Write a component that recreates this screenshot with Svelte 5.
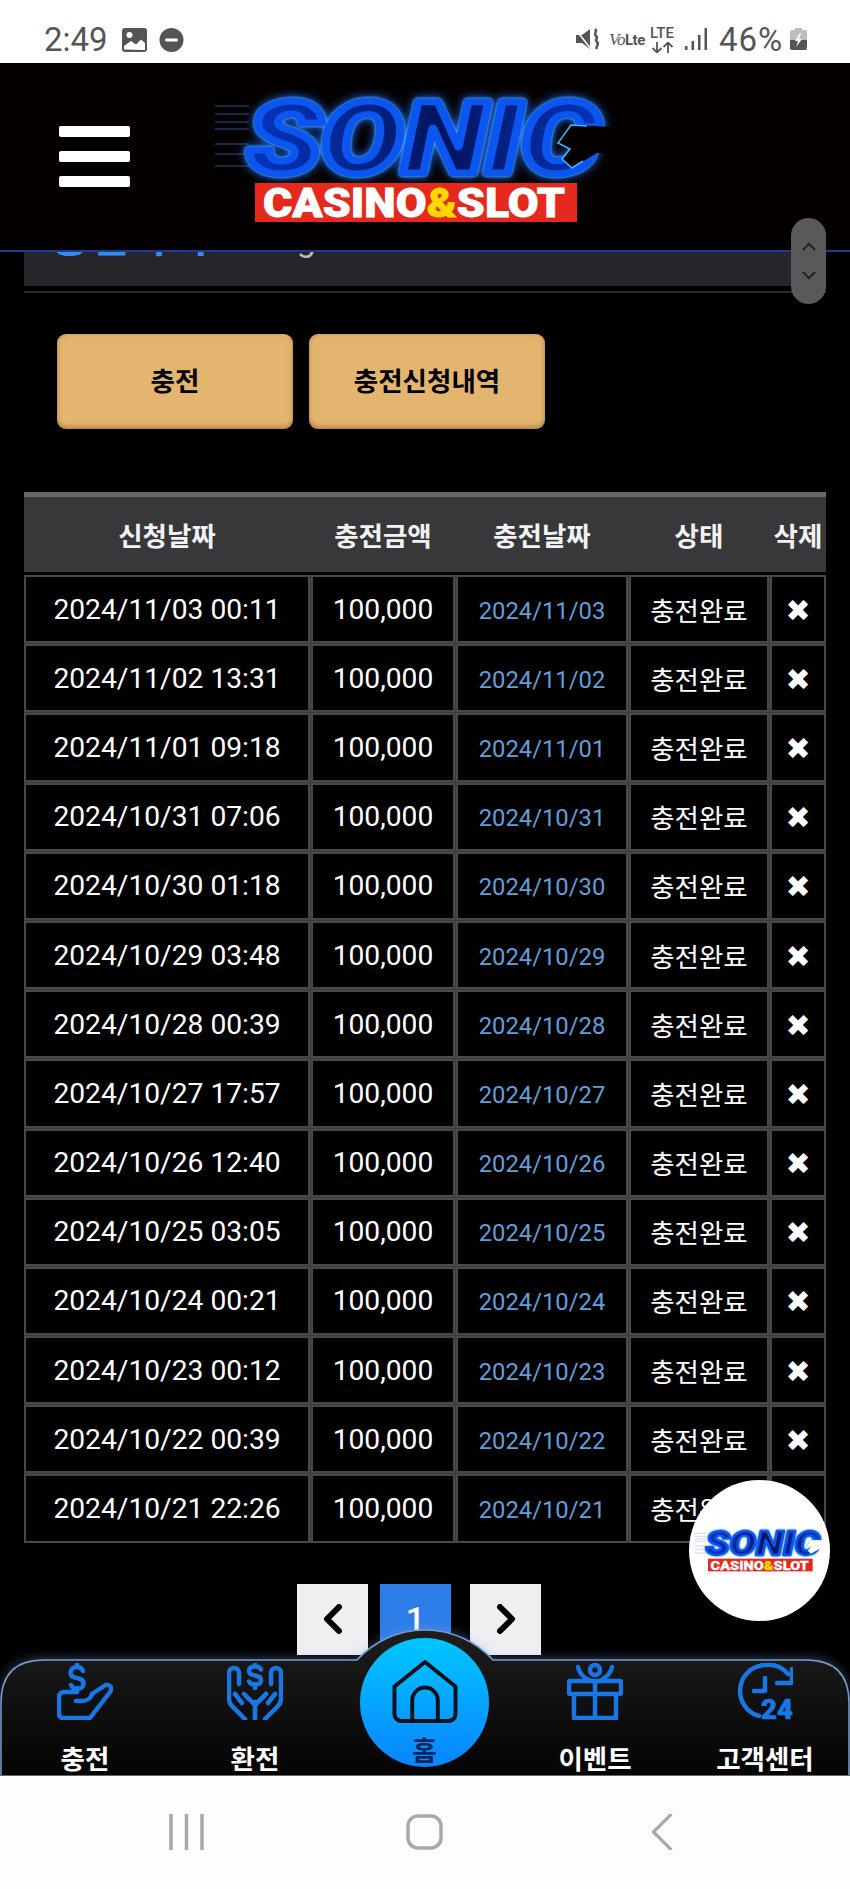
<script>
    const rows = [
        ["2024/11/03 00:11", "2024/11/03"],
        ["2024/11/02 13:31", "2024/11/02"],
        ["2024/11/01 09:18", "2024/11/01"],
        ["2024/10/31 07:06", "2024/10/31"],
        ["2024/10/30 01:18", "2024/10/30"],
        ["2024/10/29 03:48", "2024/10/29"],
        ["2024/10/28 00:39", "2024/10/28"],
        ["2024/10/27 17:57", "2024/10/27"],
        ["2024/10/26 12:40", "2024/10/26"],
        ["2024/10/25 03:05", "2024/10/25"],
        ["2024/10/24 00:21", "2024/10/24"],
        ["2024/10/23 00:12", "2024/10/23"],
        ["2024/10/22 00:39", "2024/10/22"],
        ["2024/10/21 22:26", "2024/10/21"],
    ];
    const heads = ["신청날짜", "충전금액", "충전날짜", "상태", "삭제"];
    const speedLines = [17, 25, 33, 40, 55, 65, 77];
</script>

{#snippet logo(cls)}
    <svg class={cls} viewBox="0 0 400 150">
        <defs>
            <linearGradient id="sonicFill" x1="0" y1="0" x2="1" y2="0">
                <stop offset="0" stop-color="#0434c0" />
                <stop offset="0.3" stop-color="#03268f" />
                <stop offset="0.55" stop-color="#02145e" />
                <stop offset="0.8" stop-color="#03268f" />
                <stop offset="1" stop-color="#0434c0" />
            </linearGradient>
        </defs>
        {#each speedLines as y}
            <line x1="0" x2="34" y1={y} y2={y} stroke="#3d5fb0" stroke-width="1.5" opacity="0.55" />
        {/each}
        <text class="logo-sonic" x="32" y="84" textLength="352" lengthAdjust="spacingAndGlyphs">SONIC</text>
        <path class="logo-notch" d="M398 38L356 36 343 54 355 60 347 70 357 79 382 64 398 64z" />
        <path class="logo-spikes" d="M372 37L356 36 343 54 355 60 347 70 357 79 368 72" />
        <rect x="40" y="94" width="322" height="39" fill="#e5291c" />
        <text class="logo-sub" x="48" y="128" textLength="302" lengthAdjust="spacingAndGlyphs">CASINO<tspan fill="#ffd800" stroke="#ffd800">&amp;</tspan>SLOT</text>
    </svg>
{/snippet}

<div class="screen">
    <!-- android status bar -->
    <div class="status-bar">
        <div class="status-left">
            <span class="clock">2:49</span>
            <svg class="st-icon" viewBox="0 0 25 24">
                <rect x="0" y="0" width="25" height="24" rx="3" fill="#555" />
                <circle cx="7.5" cy="7" r="3" fill="#fff" />
                <path d="M2 21.5V18l7-5 5 3.5 5-5 4 3.5v7z" fill="#fff" />
            </svg>
            <svg class="st-icon dnd" viewBox="0 0 25 25">
                <circle cx="12.5" cy="12.5" r="12.5" fill="#555" />
                <rect x="6" y="11" width="13" height="3" rx="1" fill="#fff" />
            </svg>
        </div>
        <div class="status-right">
            <svg class="st-mute" viewBox="0 0 23 22">
                <path d="M0 7h6l8-6v20l-8-6H0z" fill="#555" />
                <path d="M0 2l15 19" stroke="#fff" stroke-width="1.500" />
                <path d="M19 1c3 3-2 4 1 7s-2 3 1 6-2 4 0 7" fill="none" stroke="#555" stroke-width="2.500" />
            </svg>
            <span class="volte"><i>Vo</i><b>Lte</b></span>
            <span class="lte">LTE<svg viewBox="0 0 25 11"><path d="M7 0v10M2.500 6l4.500 4.500L11.500 6M18 11V1M13.500 5L18 .5 22.500 5" fill="none" stroke="#555" stroke-width="1.800" /></svg></span>
            <svg class="st-signal" viewBox="0 0 22 22">
                <rect x="0" y="18" width="2.500" height="4" fill="#555" />
                <rect x="6.500" y="13" width="2.500" height="9" fill="#555" />
                <rect x="13" y="7" width="2.500" height="15" fill="#555" />
                <rect x="19.500" y="0" width="2.500" height="22" fill="#555" />
            </svg>
            <span class="battery-pct">46%</span>
            <svg class="st-battery" viewBox="0 0 17 22">
                <path d="M5 0h7v2h3a2 2 0 0 1 2 2v16a2 2 0 0 1-2 2H2a2 2 0 0 1-2-2V4a2 2 0 0 1 2-2h3z" fill="#bdbdbd" />
                <path d="M0 12h17v8a2 2 0 0 1-2 2H2a2 2 0 0 1-2-2z" fill="#555" />
                <path d="M10 5l-5 8h3l-2 6 6-8H9l2-6z" fill="#fff" />
            </svg>
        </div>
    </div>

    <header class="topbar">
        <div class="burger">
            <span></span>
            <span></span>
            <span></span>
        </div>
        {@render logo("top-logo")}
    </header>

    <main class="content">
        <div class="title-card">
            <span class="title-ko">충전하기</span>
            <span class="title-en">Charge</span>
        </div>
        <div class="title-rule"></div>

        <div class="tabs">
            <button class="tab">충전</button>
            <button class="tab">충전신청내역</button>
        </div>

        <div class="history">
            <div class="history-head">
                {#each heads as h}
                    <div>{h}</div>
                {/each}
            </div>
            <div class="history-body">
                {#each rows as r}
                    <div class="cell">{r[0]}</div>
                    <div class="cell">100,000</div>
                    <div class="cell date">{r[1]}</div>
                    <div class="cell state">충전완료</div>
                    <div class="cell del">✖</div>
                {/each}
            </div>
        </div>

        <div class="pager">
            <div class="page-btn">
                <svg viewBox="0 0 20 30"><path d="M16 3L4 15l12 12" /></svg>
            </div>
            <div class="page-btn current">1</div>
            <div class="page-btn next">
                <svg viewBox="0 0 20 30"><path d="M4 3l12 12L4 27" /></svg>
            </div>
        </div>
    </main>

    <nav class="tabbar">
        <svg class="tabbar-bg" viewBox="0 0 850 116">
            <defs>
                <linearGradient id="navFill" x1="0" y1="0" x2="0" y2="1">
                    <stop offset="0" stop-color="#1e1e1e" />
                    <stop offset="1" stop-color="#030303" />
                </linearGradient>
            </defs>
            <path
                d="M1 117V44Q1 1 44 1H357A92 92 0 0 1 493 1H806Q849 1 849 44V117"
                fill="url(#navFill)"
                stroke="#7c9cc8"
                stroke-width="1.500"
            />
        </svg>

        <div class="tab-item">
            <svg class="tab-icon" viewBox="0 0 56 57">
                <path d="M26 8c-1-2.500-3.500-4-6-4-3.500 0-6.500 2-6.500 5.500s3 5 6.500 5.500 6.500 2 6.500 5.500-3 5.500-6.500 5.500c-2.500 0-5-1.500-6-4M20 0v4M20 25v4" />
                <path d="M20 29H7a5 5 0 0 0-5 5v17a4 4 0 0 0 4 4h27l20-26a4 4 0 0 0-6-6L35 31" />
                <path d="M35 31c-1 4-5 7-10 7h-6" />
            </svg>
            <span>충전</span>
        </div>
        <div class="tab-item">
            <svg class="tab-icon" viewBox="0 0 56 57">
                <path d="M34 6.500c-1-2-3-3-6-3-3.500 0-6 1.500-6 4.500s3 4 6 4.500 6 1.500 6 4.500-2.500 4.500-6 4.500c-3 0-5-1-6-3M28 0v3.500M28 21v4" />
                <path d="M28 57V39" />
                <path id="hand" d="M18 56L5 43Q2 40 2 36V10a5 5 0 0 1 10 0v11M28 42L17 31M8 31l7 9" />
                <use href="#hand" transform="matrix(-1 0 0 1 56 0)" />
                <path d="M28 42l11-11" />
            </svg>
            <span>환전</span>
        </div>
        <div class="tab-item spacer"></div>
        <div class="tab-item">
            <svg class="tab-icon" viewBox="0 0 56 57">
                <path d="M3 18h50a1 1 0 0 1 1 1v11a1 1 0 0 1-1 1H3a1 1 0 0 1-1-1V19a1 1 0 0 1 1-1z" />
                <path d="M7 31v24h42V31M28 18v37" />
                <circle cx="28" cy="7" r="5" />
                <path d="M11 4c1 6 6 11 13 14M45 4c-1 6-6 11-13 14" />
            </svg>
            <span>이벤트</span>
        </div>
        <div class="tab-item">
            <svg class="tab-icon" viewBox="0 0 56 57">
                <path d="M51 11A26 26 0 0 0 28 2 26 26 0 0 0 22 53" />
                <path d="M55 6v14H40" />
                <path d="M28 15v13H17" />
                <text class="icon-24" x="24" y="56" textLength="32" lengthAdjust="spacingAndGlyphs">24</text>
            </svg>
            <span>고객센터</span>
        </div>

        <div class="home-btn">
            <svg class="home-icon" viewBox="0 0 66 64">
                <path d="M33 2L64 27V55a7 7 0 0 1-7 7H9a7 7 0 0 1-7-7V27z" />
                <path d="M20 62V41a13 13 0 0 1 26 0V62" />
            </svg>
            <span>홈</span>
        </div>
    </nav>

    <div class="system-nav">
        <div class="sys-item">
            <svg viewBox="0 0 37 36"><path d="M3 0v36M18.500 0v36M34 0v36" /></svg>
        </div>
        <div class="sys-item">
            <svg viewBox="0 0 37 36"><rect x="2" y="2" width="33" height="32" rx="10" /></svg>
        </div>
        <div class="sys-item">
            <svg viewBox="0 0 37 38"><path d="M27 1L9 19l18 18" /></svg>
        </div>
    </div>

    <!-- floating chat bubble -->
    <div class="float-logo">
        {@render logo("small-logo")}
    </div>

    <!-- page scroll handle -->
    <div class="scroll-handle">
        <svg viewBox="0 0 18 10"><path d="M2 9l7-7 7 7" /></svg>
        <svg viewBox="0 0 18 10"><path d="M2 1l7 7 7-7" /></svg>
    </div>
</div>

<style>
    :global(body) {
        margin: 0;
        background: #000;
    }

    .screen {
        position: relative;
        width: 850px;
        height: 1889px;
        display: flex;
        flex-direction: column;
        overflow: hidden;
        background: #000;
        font-family: Roboto, "Noto Sans CJK KR", sans-serif;
        color: #fff;
    }

    /* STATUS BAR */
    .status-bar {
        height: 63px;
        flex: none;
        box-sizing: border-box;
        padding: 28px 43px 0 44px;
        background: #fff;
        display: flex;
        justify-content: space-between;
        align-items: flex-start;
        color: #555;
    }
    .status-left,
    .status-right {
        display: flex;
        align-items: flex-start;
    }
    .clock,
    .battery-pct {
        font-size: 33px;
        line-height: 24px;
        font-weight: 400;
    }
    .st-icon {
        width: 25px;
        height: 24px;
        margin-left: 14px;
    }
    .st-icon.dnd {
        margin-left: 12px;
    }
    .st-mute {
        width: 23px;
        height: 22px;
    }
    .volte {
        margin: 4px 0 0 10px;
        width: 33px;
        font-size: 15px;
        line-height: 16px;
        white-space: nowrap;
        letter-spacing: -0.5px;
    }
    .volte i {
        font-family: "Liberation Serif", serif;
        font-size: 17px;
    }
    .volte b {
        font-weight: 700;
    }
    .lte {
        margin: -1px 0 0 8px;
        width: 25px;
        font-size: 15px;
        line-height: 13px;
        font-weight: 500;
        display: flex;
        flex-direction: column;
    }
    .lte svg {
        width: 25px;
        height: 11px;
        margin-top: 2px;
    }
    .st-signal {
        width: 22px;
        height: 22px;
        margin-left: 10px;
    }
    .battery-pct {
        margin-left: 12px;
        width: 65px;
        letter-spacing: 1px;
    }
    .st-battery {
        width: 17px;
        height: 22px;
        margin-left: 6px;
    }

    /* TOP BAR */
    .topbar {
        height: 189px;
        flex: none;
        box-sizing: border-box;
        position: relative;
        z-index: 2;
        display: flex;
        align-items: center;
        padding-left: 59px;
        background: #050000;
        border-bottom: 2px solid #1b3a94;
    }
    .burger {
        width: 71px;
        display: flex;
        flex-direction: column;
        gap: 14px;
    }
    .burger span {
        height: 11px;
        border-radius: 2px;
        background: #fff;
    }
    .top-logo {
        width: 400px;
        height: 150px;
        margin: 14px 0 0 85px;
    }
    /* thick blue stroke + thin cyan halo = the neon outline of the logo */
    .logo-sonic {
        font-family: Roboto, sans-serif;
        font-weight: 900;
        font-style: italic;
        font-size: 100px;
        fill: url(#sonicFill);
        stroke: #0b55f0;
        stroke-width: 7px;
        stroke-linejoin: round;
        filter: drop-shadow(0 0 1px #6fd0ff) drop-shadow(0 0 5px #1c74ff);
    }
    .logo-notch {
        fill: #050000;
    }
    .logo-spikes {
        fill: none;
        stroke: #3fb4ff;
        stroke-width: 1.500px;
    }
    .small-logo .logo-notch {
        fill: #fff;
    }
    .logo-sub {
        font-family: Roboto, sans-serif;
        font-weight: 900;
        font-size: 41px;
        fill: #fff;
        stroke: #fff;
        stroke-width: 0.8px;
    }

    /* CONTENT */
    .content {
        height: 1407px;
        flex: none;
    }
    .title-card {
        box-sizing: border-box;
        height: 120px;
        margin: -86px 24px 0 24px;
        padding: 0 0 27px 26px;
        background: #25252a;
        display: flex;
        align-items: flex-end;
        line-height: 1;
    }
    .title-ko {
        font-size: 43px;
        font-weight: 700;
        color: #2f8ef0;
    }
    .title-en {
        margin: 0 0 3px 18px;
        font-size: 34px;
        color: #bbb;
    }
    .title-rule {
        height: 2px;
        margin: 5px 24px 0 24px;
        background: #2a2a2e;
    }

    .tabs {
        display: flex;
        gap: 16px;
        margin-top: 41px;
        padding-left: 57px;
    }
    .tab {
        width: 236px;
        height: 95px;
        padding: 0 0 4px;
        border: 0;
        border-radius: 9px;
        background: #e4b56f;
        box-shadow: inset 0 -3px 4px rgba(140, 95, 30, 0.4), inset 0 0 5px rgba(150, 105, 40, 0.35);
        font-family: inherit;
        font-size: 26.500px;
        font-weight: 700;
        color: #000;
    }

    .history {
        margin: 63px 24px 0 24px;
    }
    .history-head,
    .history-body {
        display: grid;
        grid-template-columns: 286px 144px 172px 140px 56px;
        column-gap: 1px;
    }
    .history-head {
        height: 80px;
        box-sizing: border-box;
        border-top: 5px solid #666;
        background: #38383a;
        align-items: center;
        text-align: center;
        font-size: 26.500px;
        font-weight: 700;
        color: #f2f2f2;
    }
    .history-body {
        margin-top: 3px;
        grid-auto-rows: 68.200px;
        row-gap: 1px;
        background: #3c3c3c;
    }
    .cell {
        box-sizing: border-box;
        border: 2px solid #484848;
        background: #000;
        display: flex;
        align-items: center;
        justify-content: center;
        font-size: 28.200px;
        white-space: nowrap;
    }
    .cell.date {
        font-size: 23.800px;
        color: #5f9fdc;
        padding-top: 3px;
    }
    .cell.state {
        font-size: 26.500px;
    }
    .cell.del {
        font-family: "DejaVu Sans", sans-serif;
        font-size: 30px;
        padding-top: 2px;
    }

    .pager {
        display: flex;
        gap: 12px;
        margin-top: 41px;
        padding-left: 297px;
    }
    .page-btn {
        width: 71px;
        height: 71px;
        display: flex;
        align-items: center;
        justify-content: center;
        background: #efeff1;
    }
    .page-btn svg {
        width: 20px;
        height: 30px;
        fill: none;
        stroke: #000;
        stroke-width: 6;
        stroke-linejoin: round;
        stroke-linecap: round;
    }
    .page-btn.current {
        background: #2d7de8;
        font-size: 34px;
        font-weight: 500;
    }
    .page-btn.next {
        margin-left: 7px;
    }

    /* BOTTOM TAB BAR */
    .tabbar {
        position: relative;
        z-index: 3;
        height: 116px;
        flex: none;
        display: grid;
        grid-template-columns: repeat(5, 170px);
        overflow: visible;
    }
    .tabbar-bg {
        position: absolute;
        left: 0;
        top: 0;
        width: 850px;
        height: 116px;
        overflow: visible;
        filter: drop-shadow(0 -2px 5px rgba(110, 165, 255, 0.3));
    }
    .tab-item {
        position: relative;
        display: flex;
        flex-direction: column;
        align-items: center;
        padding-top: 4px;
        overflow: hidden;
        height: 116px;
        box-sizing: border-box;
    }
    .tab-item span {
        margin-top: 25px;
        font-size: 26.500px;
        line-height: 30px;
        font-weight: 700;
    }
    .tab-icon {
        width: 56px;
        height: 57px;
        fill: none;
        stroke: #1877e6;
        stroke-width: 4.500;
        stroke-linecap: round;
        stroke-linejoin: round;
    }
    .icon-24 {
        font-family: Roboto, sans-serif;
        font-weight: 900;
        font-size: 28px;
        fill: #1877e6;
        stroke: #1877e6;
        stroke-width: 0.6;
    }
    .home-btn {
        position: absolute;
        left: 360px;
        top: -21px;
        width: 129px;
        height: 129px;
        box-sizing: border-box;
        padding-top: 22px;
        border-radius: 50%;
        display: flex;
        flex-direction: column;
        align-items: center;
        background: linear-gradient(#00c6ff, #0a84ff);
        color: #07285e;
    }
    .home-icon {
        width: 66px;
        height: 64px;
        fill: none;
        stroke: #04101c;
        stroke-width: 4;
        stroke-linejoin: round;
    }
    .home-btn span {
        margin-top: 14px;
        font-size: 27px;
        line-height: 30px;
        font-weight: 700;
    }

    /* ANDROID NAV */
    .system-nav {
        flex: 1;
        position: relative;
        z-index: 4;
        box-sizing: border-box;
        padding: 38px 0 0 67px;
        background: #fdfdfd;
        border-top: 1px solid #666;
        display: grid;
        grid-template-columns: 238px 238px 238px;
        align-items: start;
        justify-items: center;
    }
    .sys-item svg {
        display: block;
        width: 37px;
        height: 36px;
        fill: none;
        stroke: #a9a9ab;
        stroke-width: 3.5;
        stroke-linecap: round;
        stroke-linejoin: round;
    }

    /* OVERLAYS */
    .float-logo {
        position: absolute;
        z-index: 5;
        left: 689px;
        top: 1480px;
        width: 141px;
        height: 141px;
        border-radius: 50%;
        background: #fff;
        display: flex;
        align-items: center;
        justify-content: center;
    }
    .small-logo {
        width: 130px;
        height: 49px;
        margin: 4px 0 0 1px;
    }
    .small-logo .logo-sonic {
        filter: drop-shadow(0 0 3px #1c74ff);
    }
    .scroll-handle {
        position: absolute;
        z-index: 5;
        left: 791px;
        top: 218px;
        width: 35px;
        height: 86px;
        box-sizing: border-box;
        padding: 24px 0;
        border-radius: 18px;
        background: #59595b;
        display: flex;
        flex-direction: column;
        align-items: center;
        justify-content: space-between;
    }
    .scroll-handle svg {
        width: 16px;
        height: 9px;
        fill: none;
        stroke: #1f1f1f;
        stroke-width: 2;
    }
</style>
